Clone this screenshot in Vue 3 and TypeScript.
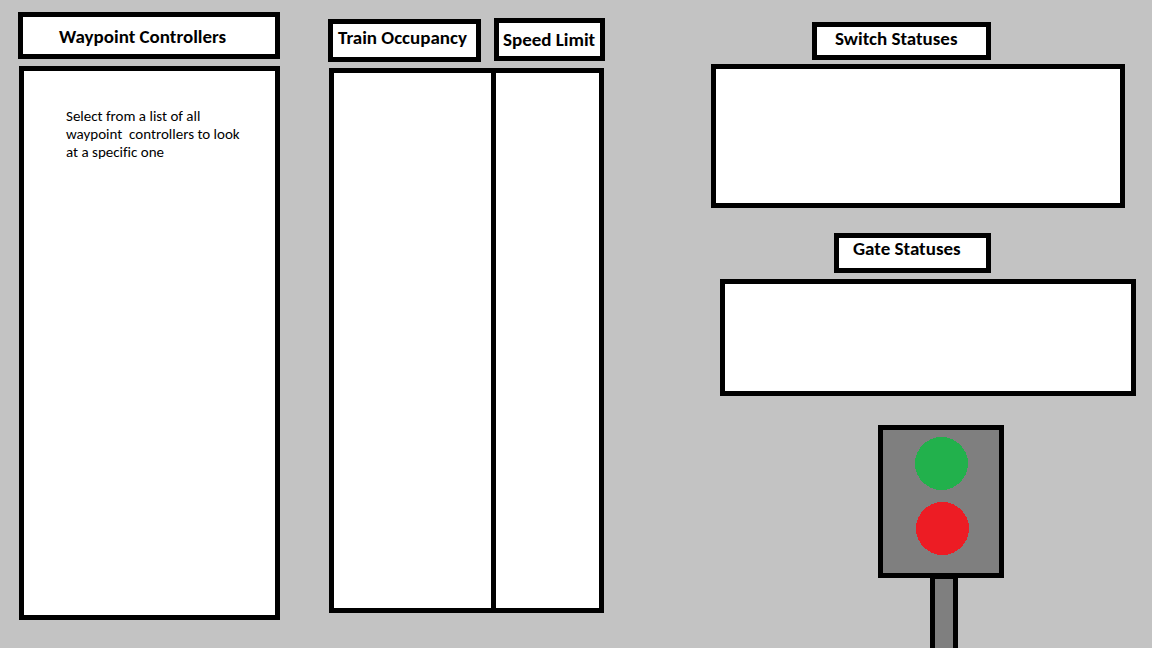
<script setup lang="ts">
const controllerHint: string =
  'Select from a list of all\nwaypoint  controllers to look\nat a specific one'
</script>

<template>
  <main class="board">
    <section class="controllers">
      <h2 class="label label-controllers">Waypoint Controllers</h2>
      <div class="panel panel-controllers">
        <p class="hint">{{ controllerHint }}</p>
      </div>
    </section>

    <section class="track">
      <div class="track-labels">
        <h2 class="label label-occupancy">Train Occupancy</h2>
        <h2 class="label label-speed">Speed Limit</h2>
      </div>
      <div class="panel panel-track">
        <div class="occupancy"></div>
        <div class="speed"></div>
      </div>
    </section>

    <section class="statuses">
      <h2 class="label label-switch">Switch Statuses</h2>
      <div class="panel panel-switch"></div>
      <h2 class="label label-gate">Gate Statuses</h2>
      <div class="panel panel-gate"></div>
      <div class="signal">
        <svg class="signal-head" viewBox="0 0 126 153" role="img" aria-label="Signal light">
          <rect width="126" height="153" fill="#000" />
          <rect x="5" y="5" width="116" height="143" fill="#7f7f7f" />
          <circle cx="63.5" cy="38.5" r="26.5" fill="#22b14c" />
          <circle cx="64.5" cy="103.5" r="26.5" fill="#ed1c24" />
        </svg>
        <div class="signal-pole"></div>
      </div>
    </section>
  </main>
</template>

<style>
body {
  margin: 0;
  background: #c3c3c3;
}
</style>

<style scoped>
.board {
  box-sizing: border-box;
  min-height: 100vh;
  display: grid;
  grid-template-columns: minmax(0, 262fr) minmax(0, 277fr) minmax(0, 483fr);
  column-gap: 48px;
  padding: 0 16px 0 18px;
  background: #c3c3c3;
  color: #000;
  font-family: Calibri, Carlito, Lato, "Liberation Sans", sans-serif;
  font-variant-ligatures: none;
}

.controllers,
.track,
.statuses {
  display: flex;
  flex-direction: column;
}

.controllers {
  padding: 12px 0 28px;
}

.track {
  padding: 18px 0 35px;
}

.statuses {
  padding: 22px 0 0 58px;
}

.label,
.panel {
  box-sizing: border-box;
  border: 5px solid #000;
  background: #fff;
}

.label {
  margin: 0;
  font-size: 19px;
  font-weight: 700;
  line-height: 22px;
  white-space: nowrap;
}

.label-controllers {
  padding: 9px 0 6px 36px;
}

.panel-controllers {
  flex: 1;
  margin: 7px 0 0 1px;
  padding: 36px 0 0 42px;
}

.hint {
  margin: 0;
  font-size: 15px;
  line-height: 18px;
  white-space: pre-wrap;
}

.track-labels {
  display: grid;
  grid-template-columns: minmax(0, 153fr) minmax(0, 111fr);
  column-gap: 13px;
}

.label-occupancy {
  margin-top: 1px;
  padding: 3px 0 8px 5px;
}

.label-speed {
  margin-bottom: 1px;
  padding: 6px 0 5px 4px;
}

.panel-track {
  flex: 1;
  display: grid;
  grid-template-columns: minmax(0, 162fr) minmax(0, 103fr);
  margin: 6px 1px 0;
}

.occupancy {
  border-right: 5px solid #000;
}

.label-switch {
  margin: 0 145px 0 101px;
  padding: 1px 0 5px 18px;
}

.panel-switch {
  height: 144px;
  margin: 4px 11px 0 0;
}

.label-gate {
  margin: 25px 145px 0 123px;
  padding: 0 0 8px 14px;
}

.panel-gate {
  height: 117px;
  margin: 6px 0 0 9px;
}

.signal {
  flex: 1;
  display: flex;
  flex-direction: column;
  margin: 29px 0 0 167px;
}

.signal-head {
  display: block;
  width: 126px;
  height: 153px;
  shape-rendering: crispEdges;
}

.signal-pole {
  box-sizing: border-box;
  flex: 1;
  width: 28px;
  margin-left: 52px;
  border: solid #000;
  border-width: 1px 5px 0;
  background: #7f7f7f;
}
</style>
